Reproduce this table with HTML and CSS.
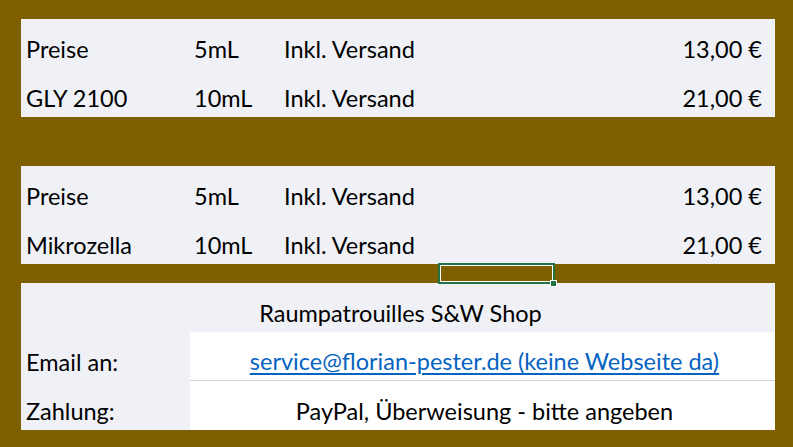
FILE: index.html
```html
<!DOCTYPE html>
<html lang="de">
<head>
    <meta charset="UTF-8">
    <meta name="viewport" content="width=device-width, initial-scale=1.0">
    <title>Preisliste</title>
    <link rel="stylesheet" href="styles.css">
</head>
<body>
    <div class="sheet">
        <!-- GLY 2100 -->
        <div class="block">
            <div class="row">
                <div class="cell">Preise</div>
                <div class="cell">5mL</div>
                <div class="cell">Inkl. Versand</div>
                <div class="cell price">13,00 €</div>
            </div>
            <div class="row">
                <div class="cell">GLY 2100</div>
                <div class="cell">10mL</div>
                <div class="cell">Inkl. Versand</div>
                <div class="cell price">21,00 €</div>
            </div>
        </div>

        <div class="gap-large"></div>

        <!-- Mikrozella -->
        <div class="block">
            <div class="row">
                <div class="cell">Preise</div>
                <div class="cell">5mL</div>
                <div class="cell">Inkl. Versand</div>
                <div class="cell price">13,00 €</div>
            </div>
            <div class="row">
                <div class="cell">Mikrozella</div>
                <div class="cell">10mL</div>
                <div class="cell">Inkl. Versand</div>
                <div class="cell price">21,00 €</div>
            </div>
        </div>

        <div class="gap-small">
            <div class="selected-cell"></div>
        </div>

        <!-- Shop info -->
        <div class="block">
            <div class="row title-row">
                <div class="cell centered">Raumpatrouilles S&amp;W Shop</div>
            </div>
            <div class="row info-row">
                <div class="cell">Email an:</div>
                <div class="cell value underlined"><a href="#">service@florian-pester.de (keine Webseite da)</a></div>
            </div>
            <div class="row info-row">
                <div class="cell">Zahlung:</div>
                <div class="cell value">PayPal, Überweisung - bitte angeben</div>
            </div>
        </div>
    </div>
</body>
</html>
```

FILE: styles.css
```css
/* --- spreadsheet look --- */
html, body {
    margin: 0;
    height: 100%;
    background-color: #7f6000;
}

body {
    font-family: Lato, "Open Sans", sans-serif;
    font-size: 23.5px;
    line-height: 23px;
    color: #000;
}

.sheet {
    padding: 19px 18px 0 21px;
}

.block {
    background-color: #eff1f7;
}

.row {
    display: grid;
    grid-template-columns: 169px 90px 1fr auto;
    height: 49px;
}

.cell {
    display: flex;
    align-items: flex-end;
    padding: 0 0 7px 5px;
    box-sizing: border-box;
    white-space: nowrap;
}

.cell + .cell {
    padding-left: 4px;
}

.price {
    padding-right: 13px;
}

.title-row {
    grid-template-columns: 1fr;
}

.centered {
    justify-content: center;
}

.info-row {
    grid-template-columns: 169px 1fr;
}

.value {
    justify-content: center;
    background-color: #fff;
}

.underlined {
    border-bottom: 1px solid #d4d4d4;
}

.value a {
    color: #0563c1;
    text-decoration: underline;
    text-decoration-thickness: 2px;
    text-underline-offset: 3px;
}

.gap-large {
    height: 49px;
}

.gap-small {
    height: 19px;
    display: grid;
    grid-template-columns: 417px 117px;
}

.selected-cell {
    grid-column: 2;
    position: relative;
    height: 21px;
    margin-top: -1px;
    box-sizing: border-box;
    border: 2px solid #217346;
    box-shadow: inset 0 0 0 1px #fff;
}

.selected-cell::after {
    content: "";
    position: absolute;
    right: -4px;
    bottom: -5px;
    width: 5px;
    height: 5px;
    background-color: #217346;
    border: 1px solid #fff;
}
```
